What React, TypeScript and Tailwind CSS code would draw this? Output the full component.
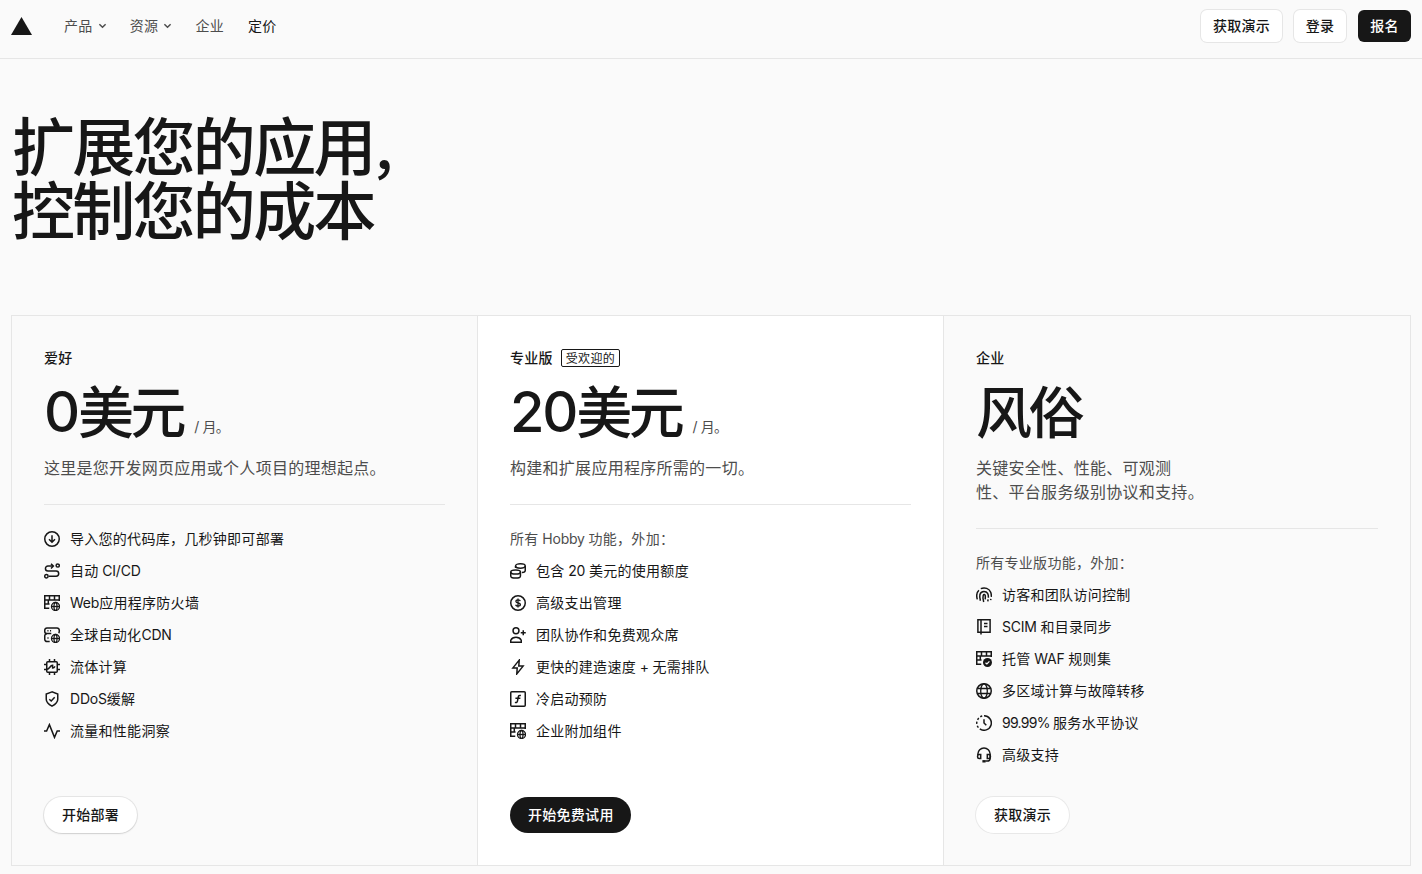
import React from 'react';

type IconName =
    | 'download' | 'route' | 'wallGlobe' | 'serverGlobe' | 'cpu' | 'shield' | 'pulse'
    | 'coins' | 'dollar' | 'userPlus' | 'bolt' | 'fn'
    | 'fingerprint' | 'book' | 'wallCheck' | 'globe' | 'clock' | 'headset';

interface Feature {
    icon: IconName;
    label: string;
}

interface Plan {
    name: string;
    badge?: string;
    amount?: string;
    unit: string;
    description: string[];
    intro?: string;
    features: Feature[];
    action: string;
    variant: 'raised' | 'dark' | 'flat';
}

const PLANS: Plan[] = [
    {
        name: '爱好',
        amount: '0',
        unit: '美元',
        description: ['这里是您开发网页应用或个人项目的理想起点。'],
        features: [
            { icon: 'download', label: '导入您的代码库，几秒钟即可部署' },
            { icon: 'route', label: '自动 CI/CD' },
            { icon: 'wallGlobe', label: 'Web应用程序防火墙' },
            { icon: 'serverGlobe', label: '全球自动化CDN' },
            { icon: 'cpu', label: '流体计算' },
            { icon: 'shield', label: 'DDoS缓解' },
            { icon: 'pulse', label: '流量和性能洞察' },
        ],
        action: '开始部署',
        variant: 'raised',
    },
    {
        name: '专业版',
        badge: '受欢迎的',
        amount: '20',
        unit: '美元',
        description: ['构建和扩展应用程序所需的一切。'],
        intro: '所有 Hobby 功能，外加：',
        features: [
            { icon: 'coins', label: '包含 20 美元的使用额度' },
            { icon: 'dollar', label: '高级支出管理' },
            { icon: 'userPlus', label: '团队协作和免费观众席' },
            { icon: 'bolt', label: '更快的建造速度 + 无需排队' },
            { icon: 'fn', label: '冷启动预防' },
            { icon: 'wallGlobe', label: '企业附加组件' },
        ],
        action: '开始免费试用',
        variant: 'dark',
    },
    {
        name: '企业',
        unit: '风俗',
        description: ['关键安全性、性能、可观测', '性、平台服务级别协议和支持。'],
        intro: '所有专业版功能，外加：',
        features: [
            { icon: 'fingerprint', label: '访客和团队访问控制' },
            { icon: 'book', label: 'SCIM 和目录同步' },
            { icon: 'wallCheck', label: '托管 WAF 规则集' },
            { icon: 'globe', label: '多区域计算与故障转移' },
            { icon: 'clock', label: '99.99% 服务水平协议' },
            { icon: 'headset', label: '高级支持' },
        ],
        action: '获取演示',
        variant: 'flat',
    },
];

const BUTTON_STYLES = {
    raised: 'bg-white text-[#171717] shadow-[0_0_0_1px_rgba(0,0,0,0.08),0_1px_2px_rgba(0,0,0,0.1)]',
    dark: 'bg-[#171717] text-white pr-[17px]',
    flat: 'bg-white text-[#171717] shadow-[0_0_0_1px_rgba(0,0,0,0.07)]',
};

// Small globe that sits in the bottom right corner of the composite icons
const MiniGlobe = () => (
    <g strokeWidth="1.3">
        <circle cx="11.5" cy="11.5" r="4" />
        <ellipse cx="11.5" cy="11.5" rx="1.5" ry="4" />
        <path d="M7.5 11.5h8" />
    </g>
);

const Wall = () => (
    <path d="M15.25 6V.75H.75v12.5h4.5M.75 4.9h14.5M5.5.8v4M10.5.8v4M4.3 4.9V9M.75 9.1h4.8" strokeWidth="1.5" />
);

const ICONS: Record<IconName, React.ReactNode> = {
    download: (
        <>
            <circle cx="8" cy="8" r="7.25" />
            <path d="M8 4.25v7M5 8.25l3 3 3-3" />
        </>
    ),
    route: (
        <>
            <path d="M9 3.1H3.9a2.45 2.45 0 0 0 0 4.9h8.2a2.6 2.6 0 0 1 0 5.2H4.7" />
            <path d="M7 .7l2.4 2.4L7 5.5" />
            <circle cx="13.7" cy="2.5" r="1.6" />
            <circle cx="2.4" cy="13.3" r="1.7" />
        </>
    ),
    wallGlobe: (
        <>
            <Wall />
            <MiniGlobe />
        </>
    ),
    serverGlobe: (
        <>
            <path d="M14.6 6.1c.4-.4.65-.9.65-1.6V3.2A2.2 2.2 0 0 0 13 1H3A2.2 2.2 0 0 0 .75 3.2v1.2C.75 5.7 1.7 6.6 3 6.6h4.3M5.7 14.5H3a2.2 2.2 0 0 1-2.25-2.2v-3A2.4 2.4 0 0 1 3 6.7" />
            <path d="M3.4 3.8h1.1M6 3.8h1.1M3.4 11h1.2" />
            <MiniGlobe />
        </>
    ),
    cpu: (
        <>
            <rect x="2.75" y="2.75" width="10.5" height="10.5" rx="1" />
            <path d="M5.5 0v2.5M10.5 0v2.5M5.5 13.5V16M10.5 13.5V16M0 5.5h2.5M0 10.5h2.5M13.5 5.5H16M13.5 10.5H16" />
            <path d="M3 10.2c2.8 0 2.8-3.8 5.6-3.9v2.6c1.2.2 1.8-.6 2.4-1.6" />
        </>
    ),
    shield: (
        <>
            <path d="M8 .9L2.25 3v5.2c0 3 2.2 5.1 5.75 6.9 3.55-1.8 5.75-3.9 5.75-6.9V3z" />
            <path d="M5.3 8.2l1.9 1.8 3.5-3.7" />
        </>
    ),
    pulse: <path d="M0 8h2.6L5.4 1.6l5.1 12.8L13.2 8H16" />,
    coins: (
        <>
            <ellipse cx="10.4" cy="3" rx="4.85" ry="2.15" />
            <path d="M5.55 3v1.9M15.25 3v4.4c0 1.1-1.3 1.9-3.3 2.2" />
            <ellipse cx="5.6" cy="9" rx="4.85" ry="2.1" />
            <path d="M.75 9v3.9c0 1.3 2.1 2.2 4.85 2.2s4.85-.9 4.85-2.2V9" />
        </>
    ),
    dollar: (
        <>
            <circle cx="8" cy="8" r="7.25" />
            <path d="M10.3 6.2c-.2-.8-1.1-1.3-2.2-1.3-1.3 0-2.2.6-2.2 1.5 0 2.2 4.5 1 4.5 3.2 0 .9-1 1.6-2.3 1.6-1.3 0-2.2-.6-2.5-1.5M8 3.4v9.2" strokeWidth="1.3" />
        </>
    ),
    userPlus: (
        <>
            <circle cx="6" cy="3.7" r="2.95" />
            <path d="M.75 15.25v-2c1-1.9 3-2.9 5.25-2.9s4.25 1 5.25 2.9v2zM13.25 3.2v5M10.75 5.7h5" />
        </>
    ),
    bolt: <path d="M9.2 1.1L2.9 8.9h4.3l-.4 6 6.3-7.8H8.8z" />,
    fn: (
        <>
            <rect x=".75" y=".75" width="14.5" height="14.5" rx="1" />
            <path d="M10.9 4.5c-1.9-.4-2.4.2-2.7 1.8l-.7 3.6c-.3 1.5-.9 2-2.6 1.5M5.4 7.3h5" />
        </>
    ),
    fingerprint: (
        <>
            <path d="M1.3 12.4C.3 8.8.5 5.4 2.9 3.2M4.8 1.7c3.9-1.9 8.5-.1 9.9 3.6.5 1.3.7 2.8.6 4.6M14.9 11.8l-.3 1.4" />
            <path d="M4.4 13.8C3.2 9.7 3.1 4.5 8 4.5c3.6 0 4.6 3 4.4 6.2M12.1 12.3l-.3 2" />
            <path d="M7.7 14.9C6.9 12.5 6.7 10 7.2 8.4c.5-1.4 2-1.1 2.1.5.1 1.2 0 2.4-.1 3.5" />
        </>
    ),
    book: <path d="M1.9.85h12.2v12.3H1.9zM5 1v14.5M8 4.6h3.5M8 7.4h3.5" />,
    wallCheck: (
        <>
            <Wall />
            <circle cx="11.5" cy="11.5" r="4.5" fill="currentColor" stroke="none" />
            <path d="M9.5 11.7l1.4 1.3 2.5-2.7" stroke="#fafafa" strokeWidth="1.2" />
        </>
    ),
    globe: (
        <>
            <circle cx="8" cy="8" r="7.25" />
            <ellipse cx="8" cy="8" rx="3.3" ry="7.25" strokeWidth="1.3" />
            <path d="M1.3 5.5h13.4M1.3 10.5h13.4" strokeWidth="1.3" />
        </>
    ),
    clock: (
        <>
            <path d="M8 .75a7.25 7.25 0 1 1-4.2 13.1M2.4 12.6a7.2 7.2 0 0 1-1.1-1.9M.8 8.9a7 7 0 0 1 .1-2.2M1.6 4.8a7 7 0 0 1 1.2-1.7M4.3 1.8A7 7 0 0 1 6.2 1" />
            <path d="M8 4.2V8l2.3 2.3" />
        </>
    ),
    headset: (
        <>
            <path d="M1.9 8V7.1a6.1 6.1 0 0 1 12.2 0v4.3c0 1.7-1.2 2.7-2.9 2.7H9.3" />
            <path d="M4.7 7.4H3.2c-1 0-1.6.6-1.6 1.5v1.2c0 .9.6 1.5 1.6 1.5h1.5zM11.3 7.4h1.5c1 0 1.6.6 1.6 1.5v1.2c0 .9-.6 1.5-1.6 1.5h-1.5z" />
            <path d="M6.4 14.3h3.2" strokeWidth="2.4" />
        </>
    ),
};

const Icon: React.FC<{ name: IconName }> = ({ name }) => (
    <svg
        width="16"
        height="16"
        viewBox="0 0 16 16"
        fill="none"
        stroke="currentColor"
        strokeWidth="1.5"
        className="shrink-0 text-[#171717]"
    >
        {ICONS[name]}
    </svg>
);

const MixedText: React.FC<{ text: string }> = ({ text }) => (
    <span className="whitespace-pre">
        {text.split(/([\x20-\x7e]+)/).map((part, i) => {
            if (i % 2 === 0) return part;
            return (
                <span key={i} className={part.includes('%') ? 'tracking-[-0.05em]' : 'tracking-[-0.015em]'}>
                    {part}
                </span>
            );
        })}
    </span>
);

const NavItem: React.FC<{ label: string; menu?: boolean; active?: boolean }> = ({ label, menu, active }) => (
    <a className={`flex items-center px-3 ${active ? 'text-[#171717]' : 'text-[#4d4d4d]'}`}>
        {label}
        {menu && (
            <svg width="9" height="8" viewBox="0 0 9 8" fill="none" stroke="currentColor" strokeWidth="1.5" className="-mr-[0.8px] ml-[5px]">
                <path d="M1.4 2.3L4.5 5.3l3.1-3" />
            </svg>
        )}
    </a>
);

const Header = () => (
    <header className="flex h-[59px] items-start justify-between border-b border-[#e6e6e6] px-[11px] pt-[10px]">
        <div className="flex h-8 items-center">
            <svg width="21" height="18" viewBox="0 0 21 18" className="mr-5">
                <path d="M10.5 0L21 18H0z" fill="#171717" />
            </svg>
            <nav className="flex">
                <NavItem label="产品" menu />
                <NavItem label="资源" menu />
                <NavItem label="企业" />
                <NavItem label="定价" active />
            </nav>
        </div>
        <div className="flex gap-3 font-medium">
            <button className="h-8 w-[81px] rounded-md bg-white shadow-[0_0_0_1px_rgba(0,0,0,0.08)]">获取演示</button>
            <button className="h-8 w-[52px] rounded-md bg-white shadow-[0_0_0_1px_rgba(0,0,0,0.08)]">登录</button>
            <button className="h-8 w-[53px] rounded-md bg-[#171717] text-white">报名</button>
        </div>
    </header>
);

const PlanCard: React.FC<{ plan: Plan }> = ({ plan }) => (
    <section
        className={`flex flex-col items-stretch border-[#e6e6e6] p-8 not-last:border-r ${plan.variant === 'dark' ? 'bg-white' : ''}`}
    >
        <div className="flex h-5 items-center gap-2">
            <h2 className="font-medium">{plan.name}</h2>
            {plan.badge && (
                <span className="flex h-[18px] items-center rounded-xs border border-[#171717] px-1 pt-px text-xs">{plan.badge}</span>
            )}
        </div>

        <div className="mt-4 flex h-14 items-baseline gap-[11px]">
            <span className="text-[56px] leading-[56px] font-medium tracking-[-0.06em]">
                {plan.amount && <span className="tracking-[-0.04em]">{plan.amount}</span>}
                <span className="align-[-1px]">{plan.unit}</span>
            </span>
            {plan.amount && (
                <span className="text-[#4d4d4d]">
                    <span className="mr-[3px]">/</span>月<span className="-ml-px">。</span>
                </span>
            )}
        </div>

        <p className="mt-4 text-base leading-6 text-[#4d4d4d]">
            {plan.description.map(line => (
                <span key={line} className="block">{line}</span>
            ))}
        </p>

        <div className="mt-6 flex flex-col gap-3 border-t border-[#e6e6e6] pt-6">
            {plan.intro && (
                <p className="h-5 text-[#4d4d4d]">
                    <MixedText text={plan.intro} />
                </p>
            )}
            {plan.features.map(f => (
                <div key={f.label} className="flex h-5 items-center gap-2.5">
                    <Icon name={f.icon} />
                    <MixedText text={f.label} />
                </div>
            ))}
        </div>

        <button className={`mt-auto h-9 self-start rounded-full px-[18px] font-medium ${BUTTON_STYLES[plan.variant]}`}>
            {plan.action}
        </button>
    </section>
);

export default function App() {
    return (
        <div className="h-[874px] overflow-hidden bg-[#fafafa] font-['Inter','Noto_Sans_CJK_SC',sans-serif] text-sm leading-5 tracking-[0.02em] text-[#171717] antialiased">
            <Header />
            <main className="px-[11px]">
                <h1 className="h-64 pt-14 pl-px text-[63px] leading-16 font-medium tracking-[-0.043em]">
                    扩展您的应用<span className="-ml-1 align-[-3px] text-[56px] leading-[0.5]">，</span>
                    <br />
                    控制您的成本
                </h1>
                <div className="grid h-[551px] grid-cols-3 border border-[#e6e6e6]">
                    {PLANS.map(plan => (
                        <PlanCard key={plan.name} plan={plan} />
                    ))}
                </div>
            </main>
        </div>
    );
}
